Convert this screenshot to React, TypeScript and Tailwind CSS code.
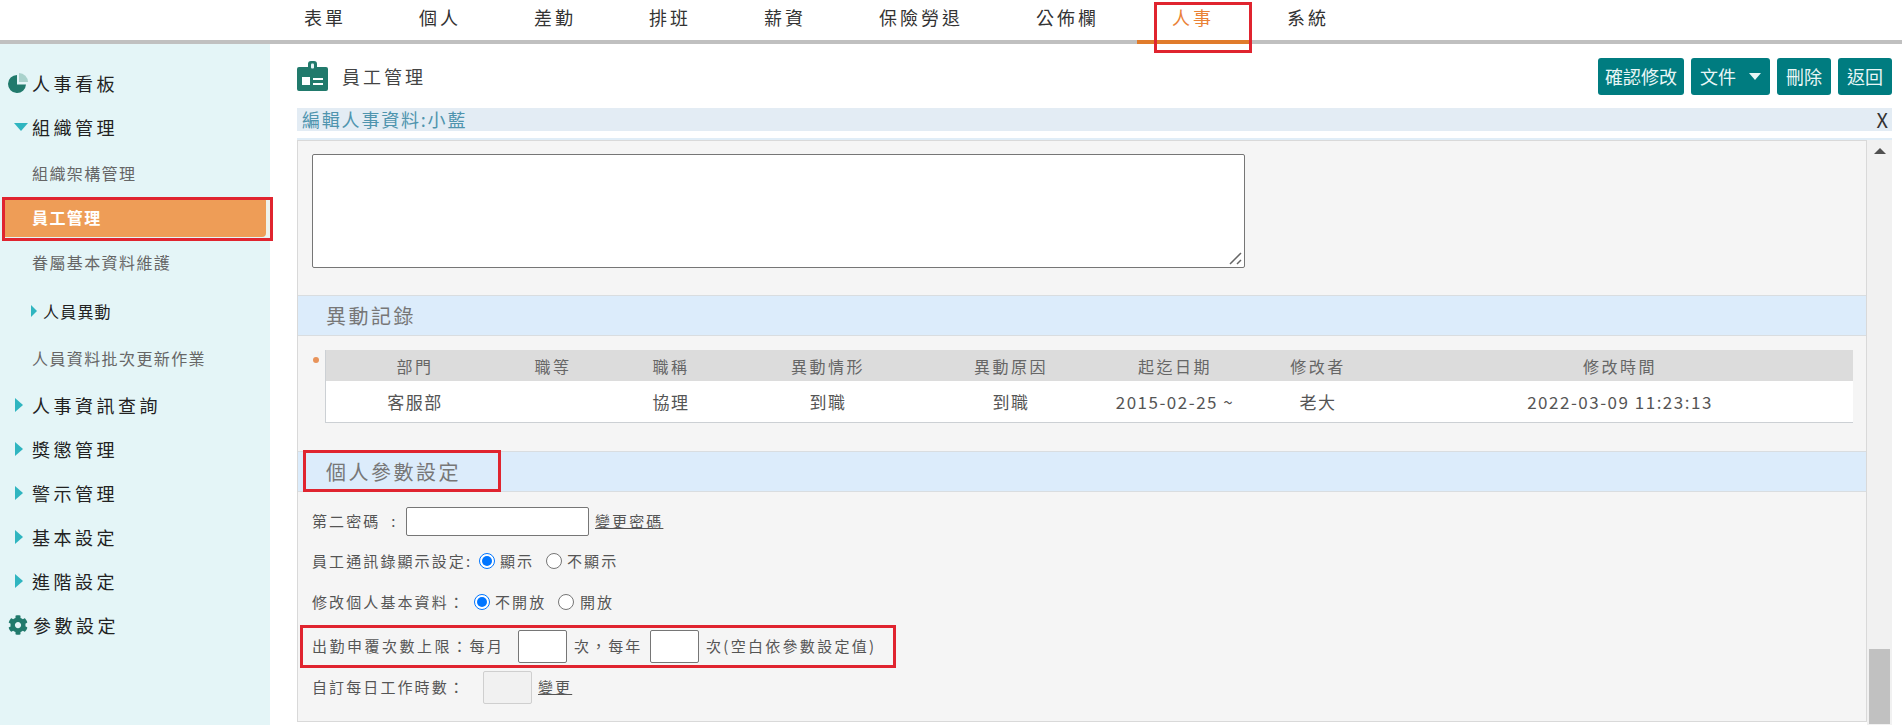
import { FaCog } from "react-icons/fa";

const navItems = ["表單", "個人", "差勤", "排班", "薪資", "保險勞退", "公佈欄", "人事", "系統"];

const columns = [
  { title: "部門", value: "客服部", width: "w-[178px]" },
  { title: "職等", value: "", width: "w-[98px]" },
  { title: "職稱", value: "協理", width: "w-[138px]" },
  { title: "異動情形", value: "到職", width: "w-[176px]" },
  { title: "異動原因", value: "到職", width: "w-[190px]" },
  { title: "起迄日期", value: "2015-02-25 ~", width: "w-[138px]" },
  { title: "修改者", value: "老大", width: "w-[148px]" },
  { title: "修改時間", value: "2022-03-09 11:23:13", width: "w-[456px]" },
];

const Arrow = ({ down = false }: { down?: boolean }) => (
  <svg width={down ? 14 : 8} height={down ? 8 : 14} viewBox={down ? "0 0 14 8" : "0 0 8 14"} className="shrink-0">
    <path d={down ? "M0 0h14L7 8z" : "M0 0l8 7-8 7z"} fill="#2fb5c0" />
  </svg>
);

const Group = ({ label }: { label: string }) => (
  <div className="flex h-[44px] items-center pl-[15px] text-[18px] tracking-[3.5px] text-[#222]">
    <Arrow />
    <span className="ml-[9px]">{label}</span>
  </div>
);

const Sub = ({ label }: { label: string }) => (
  <div className="flex h-[45px] items-center pl-[32px] text-[16px] tracking-[1.4px] text-[#666]">{label}</div>
);

const Sidebar = () => (
  <aside className="w-[270px] shrink-0 bg-[#e4f5f7] pt-[17px]">
    <div className="flex h-[44px] items-center pl-[8px] text-[18px] tracking-[3.5px] text-[#222]">
      <svg width="20" height="20" viewBox="0 0 20 20" className="shrink-0">
        <path d="M9 2a9 9 0 1 0 9 9.500H9z" fill="#217a6c" />
        <path d="M11 0a9 9 0 0 1 9 9h-9z" fill="#a9d2cc" />
      </svg>
      <span className="ml-[4px]">人事看板</span>
    </div>
    <div className="flex h-[44px] items-center pl-[14px] text-[18px] tracking-[3.5px] text-[#222]">
      <Arrow down />
      <span className="ml-[4px]">組織管理</span>
    </div>
    <div className="pt-[1px]">
      <Sub label="組織架構管理" />
    </div>
    <div className="mt-[2px] ml-[4px] flex h-[40px]">
      <div className="flex flex-1 items-center rounded-r-[4px] bg-[#ee9d57] pl-[28px] text-[16px] font-bold tracking-[1.4px] text-white">
        員工管理
      </div>
      <div className="w-[4px] bg-[#eef3ec]" />
    </div>
    <div className="pt-[2px]">
      <Sub label="眷屬基本資料維護" />
    </div>
    <div className="flex h-[53px] items-center pl-[31px] text-[16px] tracking-[1.2px] text-[#222]">
      <svg width="6" height="12" viewBox="0 0 6 12" className="shrink-0">
        <path d="M0 0l6 6-6 6z" fill="#2fb5c0" />
      </svg>
      <span className="ml-[6px]">人員異動</span>
    </div>
    <div className="flex h-[42px] items-center pl-[32px] text-[16px] tracking-[1.4px] text-[#666]">人員資料批次更新作業</div>
    <div className="pt-[4px]">
      <Group label="人事資訊查詢" />
    </div>
    <Group label="獎懲管理" />
    <Group label="警示管理" />
    <Group label="基本設定" />
    <Group label="進階設定" />
    <div className="flex h-[44px] items-center pl-[8px] text-[18px] tracking-[3.5px] text-[#222]">
      <FaCog className="size-[20px] shrink-0 text-[#217a6c]" />
      <span className="ml-[5px]">參數設定</span>
    </div>
  </aside>
);

const Btn = ({ children, className }: { children: React.ReactNode; className: string }) => (
  <button className={`flex h-[37px] items-center justify-center rounded-[3px] bg-[#007c80] text-[18px] text-[#e8f6f6] ${className}`}>
    {children}
  </button>
);

const SectionHead = ({ label }: { label: string }) => (
  <div className="flex h-[41px] items-center border-y border-[#d9dde0] bg-[#dcecfb] pl-[28px] text-[20px] tracking-[2.5px] text-[#777]">
    {label}
  </div>
);

const Radio = ({ checked = false }: { checked?: boolean }) => (
  <span className={`flex size-[16px] shrink-0 items-center justify-center rounded-full border ${checked ? "border-[#0075ff]" : "border-[#767676]"} bg-white`}>
    {checked && <span className="size-[10px] rounded-full bg-[#0075ff]" />}
  </span>
);

const Box = ({ className }: { className: string }) => (
  <span className={`block shrink-0 rounded-[2px] border ${className}`} />
);

const Panel = () => (
  <div className="flex h-[587px] border-t-2 border-[#e0edf7]">
    <div className="mb-[3px] flex-1 overflow-hidden border border-[#d9d9d9] bg-[#f5f5f5]">
      <div className="relative mt-[13px] ml-[14px] h-[114px] w-[933px] rounded-[2px] border border-[#767676] bg-white">
        <svg width="13" height="13" viewBox="0 0 13 13" className="absolute right-[2px] bottom-[2px]">
          <path d="M1 12L12 1M8 12l4-4" stroke="#666" strokeWidth="1.500" fill="none" />
        </svg>
      </div>
      <div className="mt-[27px]">
        <SectionHead label="異動記錄" />
      </div>
      <div className="mt-[14px] flex pl-[15px]">
        <span className="mt-[7px] size-[6px] rounded-full bg-[#e8935a]" />
        <div className="ml-[6px] w-[1528px] border-b border-l border-[#ccd0d4]">
          <div className="flex h-[31px] items-center bg-[#dcdcdc] text-[16px] tracking-[2.5px] text-[#666]">
            {columns.map((c) => (
              <span key={c.title} className={`${c.width} text-center`}>{c.title}</span>
            ))}
          </div>
          <div className="flex h-[41px] items-center bg-white text-[17px] tracking-[1.5px] text-[#555]">
            {columns.map((c) => (
              <span key={c.title} className={`${c.width} text-center`}>{c.value}</span>
            ))}
          </div>
        </div>
      </div>
      <div className="mt-[28px]">
        <SectionHead label="個人參數設定" />
      </div>
      <div className="pl-[14px] text-[15px] tracking-[2.1px] text-[#555]">
        <div className="mt-[15px] flex h-[29px] items-center">
          <span className="w-[94px]">第二密碼 &nbsp;:</span>
          <Box className="h-[29px] w-[183px] border-[#767676] bg-white" />
          <span className="ml-[6px] underline">變更密碼</span>
        </div>
        <div className="mt-[12px] flex h-[26px] items-center">
          <span className="w-[167px]">員工通訊錄顯示設定:</span>
          <Radio checked />
          <span className="ml-[5px] w-[46px]">顯示</span>
          <Radio />
          <span className="ml-[5px]">不顯示</span>
        </div>
        <div className="mt-[15px] flex h-[26px] items-center">
          <span className="w-[162px]">修改個人基本資料：</span>
          <Radio checked />
          <span className="ml-[5px] w-[63px]">不開放</span>
          <Radio />
          <span className="ml-[6px]">開放</span>
        </div>
        <div className="mt-[15px] flex h-[33px] items-center">
          <span className="w-[206px] tracking-[2.5px]">出勤申覆次數上限：每月</span>
          <Box className="h-[33px] w-[49px] border-[#767676] bg-white" />
          <span className="ml-[7px] w-[76px]">次，每年</span>
          <Box className="h-[33px] w-[49px] border-[#767676] bg-white" />
          <span className="ml-[7px] tracking-[2.3px]">次(空白依參數設定值)</span>
        </div>
        <div className="mt-[8px] flex h-[33px] items-center">
          <span className="w-[171px]">自訂每日工作時數：</span>
          <Box className="h-[33px] w-[49px] border-[#cfcfcf] bg-[#f1f1f1]" />
          <span className="ml-[6px] underline">變更</span>
        </div>
      </div>
    </div>
    <div className="flex w-[25px] shrink-0 flex-col items-center bg-[#f1f1f1] pb-[1px]">
      <svg width="12" height="6" viewBox="0 0 12 6" className="mt-[8px] shrink-0">
        <path d="M6 0l6 6H0z" fill="#505050" />
      </svg>
      <div className="flex-1" />
      <div className="h-[75px] w-[21px] bg-[#c1c1c1]" />
    </div>
  </div>
);

const ArrowDown = () => (
  <svg width="12" height="7" viewBox="0 0 12 7" className="shrink-0">
    <path d="M0 0h12L6 7z" fill="#e8f6f6" />
  </svg>
);

export default function App() {
  return (
    <div className="relative flex h-[725px] w-[1902px] flex-col overflow-hidden bg-white font-['Noto_Sans_CJK_TC','Liberation_Sans',sans-serif]">
      <nav className="flex h-[44px] shrink-0 items-start gap-[3px] border-b-4 border-[#c0c0c0] pl-[269px]">
        {navItems.map((item) => (
          <div
            key={item}
            className={`flex h-[44px] items-center border-b-4 px-[35px] pb-[6px] text-[18px] tracking-[3px] ${
              item === "人事" ? "border-[#e07b2b] text-[#ea8237]" : "border-transparent text-[#333]"
            }`}
          >
            {item}
          </div>
        ))}
      </nav>
      <div className="flex min-h-0 flex-1">
        <Sidebar />
        <main className="ml-[27px] min-w-0 flex-1 pr-[10px]">
          <div className="flex h-[64px] items-center justify-between">
            <div className="flex items-center">
              <svg width="31" height="30" viewBox="0 0 31 30" className="shrink-0">
                <path d="M0 8a2 2 0 0 1 2-2h9V3a3 3 0 0 1 3-3h3a3 3 0 0 1 3 3v3h9a2 2 0 0 1 2 2v20a2 2 0 0 1-2 2H2a2 2 0 0 1-2-2z" fill="#217a6c" />
                <rect x="14" y="2.500" width="3" height="5" rx="1" fill="#e4f5f7" />
                <rect x="5" y="16" width="8" height="8" fill="#fff" />
                <rect x="16" y="17" width="10" height="2" fill="#fff" />
                <rect x="16" y="22" width="10" height="2" fill="#fff" />
              </svg>
              <span className="ml-[14px] text-[18px] tracking-[3px] text-[#444]">員工管理</span>
            </div>
            <div className="flex gap-[7px]">
              <Btn className="w-[86px]">確認修改</Btn>
              <Btn className="w-[79px] gap-[13px]">
                文件
                <ArrowDown />
              </Btn>
              <Btn className="w-[54px]">刪除</Btn>
              <Btn className="w-[54px]">返回</Btn>
            </div>
          </div>
          <div className="flex h-[23px] items-center justify-between bg-[#e3ecf4] pr-[4px] pl-[5px] text-[18px] tracking-[1.8px] text-[#4f94ae]">
            <span>編輯人事資料:小藍</span>
            <span className="text-[20px] tracking-normal text-[#333]">X</span>
          </div>
          <div className="mt-[7px]">
            <Panel />
          </div>
        </main>
      </div>
      {/* 紅框標註 */}
      <div className="pointer-events-none absolute top-[2px] left-[1154px] h-[51px] w-[98px] border-[3px] border-[#e0242f]" />
      <div className="pointer-events-none absolute top-[197px] left-[2px] h-[44px] w-[271px] border-[3px] border-[#e0242f]" />
      <div className="pointer-events-none absolute top-[450px] left-[303px] h-[42px] w-[198px] border-[3px] border-[#e0242f]" />
      <div className="pointer-events-none absolute top-[625px] left-[300px] h-[43px] w-[596px] border-[3px] border-[#e0242f]" />
    </div>
  );
}
